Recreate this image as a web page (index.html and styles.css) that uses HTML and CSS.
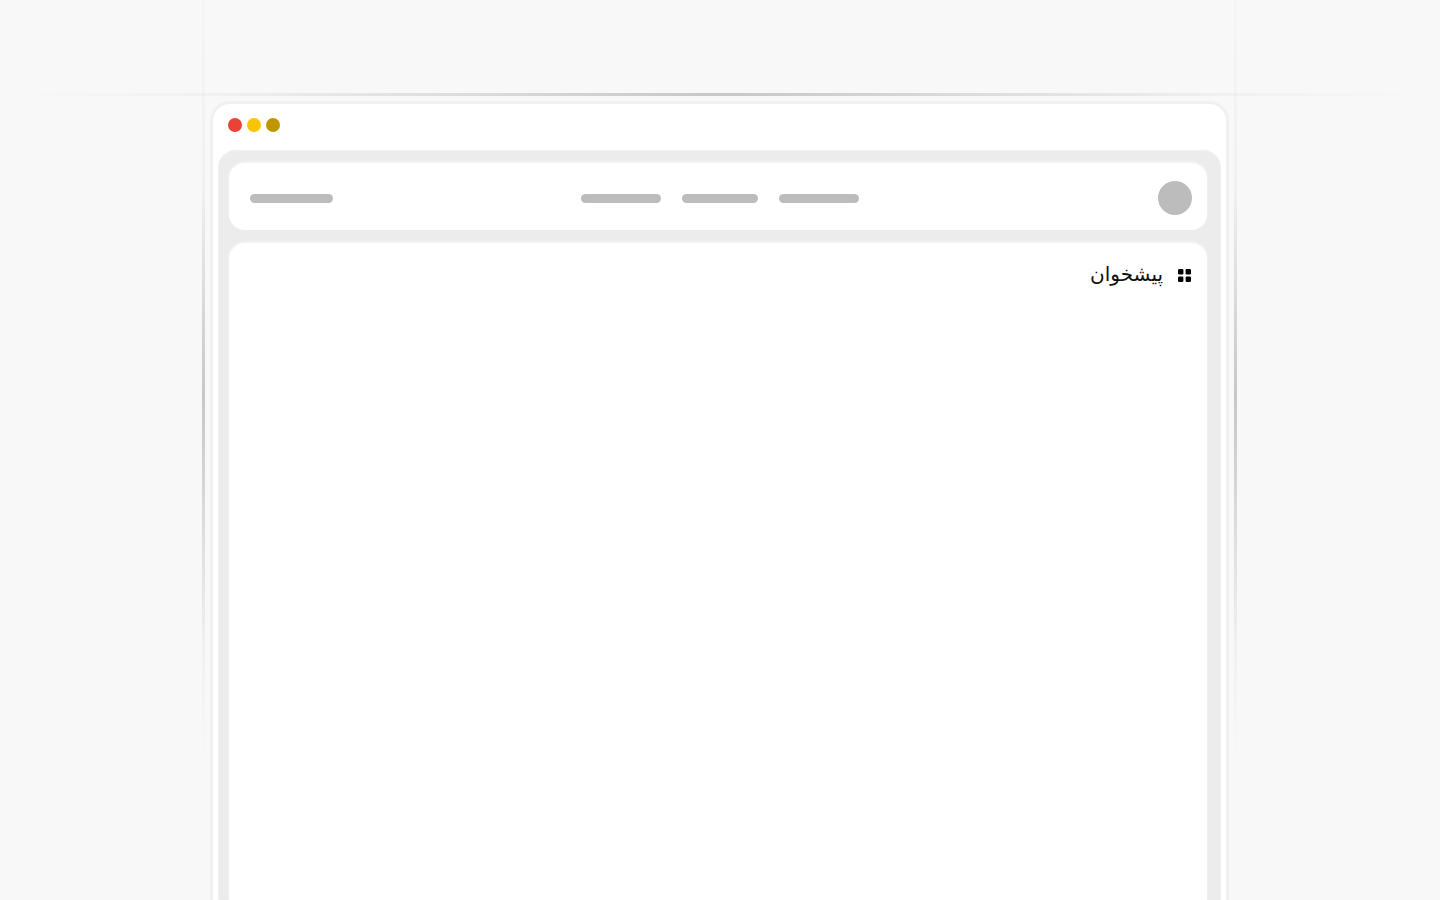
FILE: index.html
```html
<!DOCTYPE html>
<html lang="fa">
<head>
  <meta charset="UTF-8" />
  <meta name="viewport" content="width=device-width, initial-scale=1.0"/>
  <title>پیشخوان</title>

  <link rel="stylesheet" href="styles.css">
</head>
<body>

  <div class="guide guide-top"></div>
  <div class="guide guide-left"></div>
  <div class="guide guide-right"></div>

  <div class="window">
    <div class="window-bar">
      <span class="dot dot-red"></span>
      <span class="dot dot-yellow"></span>
      <span class="dot dot-olive"></span>
    </div>

    <div class="panel">
      <div class="navbar">
        <div class="bar bar-logo"></div>
        <div class="nav-links">
          <div class="bar bar-wide"></div>
          <div class="bar bar-narrow"></div>
          <div class="bar bar-wide"></div>
        </div>
        <div class="avatar"></div>
      </div>

      <div class="content">
        <div class="content-title" dir="rtl">
          <svg class="title-icon" width="13" height="13" viewBox="0 0 13 13" aria-hidden="true">
            <rect x="0" y="0" width="5.4" height="5.4" rx="1.2"/>
            <rect x="7.6" y="0" width="5.4" height="5.4" rx="1.2"/>
            <rect x="0" y="7.6" width="5.4" height="5.4" rx="1.2"/>
            <rect x="7.6" y="7.6" width="5.4" height="5.4" rx="1.2"/>
          </svg>
          <span class="title-text">پیشخوان</span>
        </div>
      </div>
    </div>
  </div>

</body>
</html>
```

FILE: styles.css
```css
* {
  margin: 0;
  padding: 0;
  box-sizing: border-box;
}

html, body {
  height: 100%;
  overflow: hidden;
}

body {
  position: relative;
  background: #f8f8f8;
  font-family: "DejaVu Sans", "Noto Sans", sans-serif;
  padding-top: 101px;
}

/* faint lines behind the window */
.guide {
  position: absolute;
}

.guide-top {
  top: 93px;
  left: 20px;
  width: 1400px;
  height: 3px;
  background: linear-gradient(90deg, rgba(0, 0, 0, 0), rgba(0, 0, 0, 0.03) 14%, rgba(0, 0, 0, 0.2) 50%, rgba(0, 0, 0, 0.03) 86%, rgba(0, 0, 0, 0));
}

.guide-left,
.guide-right {
  top: 0;
  width: 3px;
  height: 760px;
  background: linear-gradient(180deg, rgba(0, 0, 0, 0.01), rgba(0, 0, 0, 0.03) 25%, rgba(0, 0, 0, 0.2) 52%, rgba(0, 0, 0, 0.03) 85%, rgba(0, 0, 0, 0));
}

.guide-left {
  left: 202px;
}

.guide-right {
  left: 1234px;
}

.window {
  display: flex;
  flex-direction: column;
  width: 1019px;
  height: 100%;
  margin-left: 210px;
  background: #fff;
  border: 3px solid #f0f0f0;
  border-bottom: 0;
  border-radius: 20px 20px 0 0;
}

.window-bar {
  display: flex;
  flex-shrink: 0;
  gap: 5px;
  height: 46px;
  padding: 14px 0 0 15px;
}

.dot {
  width: 14px;
  height: 14px;
  border-radius: 50%;
}

.dot-red {
  background: #ea4335;
}

.dot-yellow {
  background: #fbc400;
}

.dot-olive {
  background: #bf9500;
}

.panel {
  display: flex;
  flex: 1;
  flex-direction: column;
  gap: 13px;
  margin: 0 5px 0 5px;
  padding: 13px 14px 0 11px;
  background: #ececec;
  border-radius: 18px 18px 0 0;
  box-shadow: inset 0 1px 1px #f1f1f1, inset 1px 0 1px #f1f1f1, inset -1px 0 1px #f1f1f1;
}

.navbar {
  display: grid;
  flex-shrink: 0;
  grid-template-columns: 331px 278px 1fr;
  align-items: center;
  height: 67px;
  padding: 0 15px 0 21px;
  background: #fff;
  border-radius: 16px;
  box-shadow: 0 -1px 3px rgba(255, 255, 255, 0.7);
}

.nav-links {
  display: flex;
  gap: 21px;
  margin-top: 4px;
}

.bar {
  height: 9px;
  background: #bcbcbc;
  border-radius: 5px;
}

.bar-logo {
  width: 83px;
  margin-top: 4px;
}

.bar-wide {
  width: 80px;
}

.bar-narrow {
  width: 76px;
}

.avatar {
  justify-self: end;
  width: 34px;
  height: 34px;
  margin-top: 2px;
  background: #bcbcbc;
  border-radius: 50%;
}

.content {
  flex: 1;
  padding: 16px 16px 0;
  background: #fff;
  border-radius: 16px 16px 0 0;
  box-shadow: 0 -1px 3px rgba(255, 255, 255, 0.7);
}

.content-title {
  display: flex;
  align-items: center;
  gap: 15px;
}

.title-icon {
  margin-top: 2px;
  fill: #000;
}

.title-text {
  font-size: 20px;
  line-height: 30px;
  color: #111;
}
```
